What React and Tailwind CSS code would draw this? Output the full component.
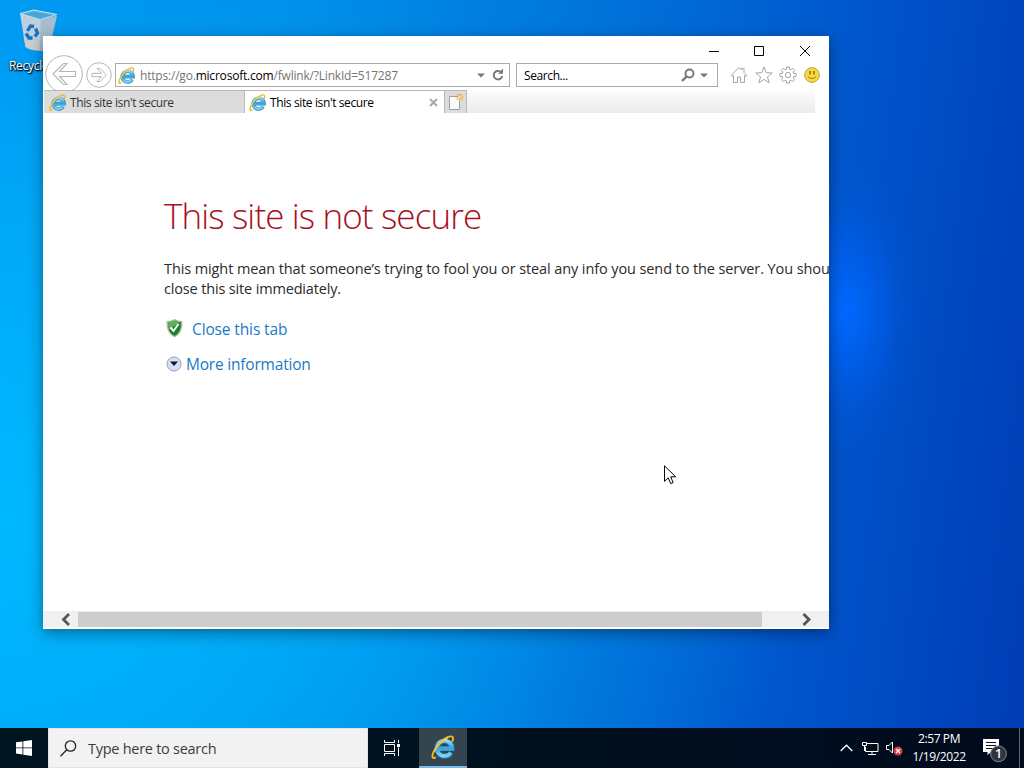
import { useId } from "react";

const IeLogo = ({ className }) => {
  const id = useId();
  return (
    <svg viewBox="0 0 24 24" className={className} fill="none">
      <defs>
        <linearGradient id={id} x1="0" y1="0" x2="0" y2="1">
          <stop offset="0" stopColor="#8adcf8" />
          <stop offset="0.5" stopColor="#35a4dc" />
          <stop offset="1" stopColor="#7fd4f5" />
        </linearGradient>
      </defs>
      <path d="M7 13.600h14.200a7.600 7.600 0 1 0-1.200 4.200" stroke="#2a7fb8" strokeWidth="5" />
      <path d="M7 13.600h14a7.600 7.600 0 1 0-1.200 3.800" stroke={`url(#${id})`} strokeWidth="3.600" />
      <path
        d="M4.200 22.600C1.600 24 .6 21.600 2.200 17.600 4.600 11.400 11 4.400 17 2c4.600-1.800 6 .2 4.400 4.200"
        stroke="#eeb818"
        strokeWidth="1.900"
        strokeLinecap="round"
      />
      <path d="M3 17.200C5.600 11 11.600 5 17 2.800" stroke="#ffe477" strokeWidth=".7" />
    </svg>
  );
};

const RecycleBin = () => (
  <svg width="40" height="44" viewBox="0 0 40 44" fill="none">
    <path d="M1 4.500 6.500 38q6 4 21 3.500L37 7 22 11Z" fill="#bfcfdd" />
    <path d="m22 11-2 31q5 0 10-1L38 7Z" fill="#a4bdcf" />
    <path d="m1 4.500 14-3.500 23 4.500L21.500 11Z" fill="#5fb5df" stroke="#c4dfee" />
    <path d="M5 5 15 3l18 3-12 3Z" fill="#4aa4d2" />
    <path d="M4.500 27 6.500 38q6 4 14 3.700L21 33Z" fill="#cfcdd0" opacity=".8" />
    <g stroke="#1474c8" strokeWidth="3.400">
      <path d="m8.500 22 3-5 3.500.500" />
      <path d="m16.500 19.500 2 4.500-2.500 3.500" />
      <path d="M13.500 29h-3.500L7 24.500" />
    </g>
  </svg>
);

const BackButton = () => (
  <svg width="38" height="38" viewBox="0 0 38 38" fill="#fff" stroke="#b5b5b5" className="shrink-0">
    <circle cx="19" cy="19" r="18.300" />
    <path d="M8 19 18.500 8.500H22l-7.500 8H30.500v5h-16l7.500 8h-3.500Z" strokeWidth="1.100" />
  </svg>
);

const ForwardButton = () => (
  <svg width="26" height="26" viewBox="0 0 26 26" fill="#fff" stroke="#b5b5b5" className="shrink-0">
    <circle cx="13" cy="13" r="12.300" />
    <path d="m20.500 13-6.500-6.500h-3l4.500 4.800H6v3.400h9.500L11 19.500h3Z" />
  </svg>
);

const Caret = () => (
  <svg width="8" height="5" viewBox="0 0 8 5">
    <path d="M0 .5h8l-4 4Z" fill="#777" />
  </svg>
);

const Refresh = () => (
  <svg width="12" height="14" viewBox="0 0 12 14" fill="none">
    <path d="M8.500 3.600A4.300 4.300 0 1 0 10.300 8" stroke="#777" strokeWidth="1.900" />
    <path d="M6 5.700h5V.5Z" fill="#777" />
  </svg>
);

const CommandIcons = () => (
  <div className="ml-[12px] flex h-[23px] items-center gap-[6.500px]">
    <svg width="18" height="18" viewBox="0 0 18 18" fill="none" stroke="#a5a5a5">
      <path d="M1 9.500 9 1.500l2.500 2.500V2.500h2.500v4l3 3-1 1-1.500-1V16.500h-4V11h-3v5.500h-4V9.500L2 10.500Z" />
    </svg>
    <svg width="18" height="18" viewBox="0 0 18 18" fill="none" stroke="#a5a5a5">
      <path d="m9 .9 2.200 5.800 6 .3-4.700 3.800 1.600 6L9 13.400l-5.100 3.400 1.600-6L.8 7l6-.3Z" />
    </svg>
    <svg width="18" height="18" viewBox="0 0 18 18" fill="none" stroke="#a0a0a0">
      <path d="M7.500 1h3v2.200l1.400.6 1.600-1.600 2.200 2.200-1.600 1.600.7 1.500H17v3h-2.200l-.7 1.500 1.600 1.600-2.200 2.200-1.600-1.600-1.400.6V17h-3v-2.200l-1.400-.6-1.600 1.600-2.200-2.200 1.600-1.600-.7-1.500H1v-3h2.200l.7-1.500-1.600-1.600 2.200-2.200 1.600 1.600 1.400-.6Z" />
      <circle cx="9" cy="9" r="2.600" />
    </svg>
    <svg width="16" height="16" viewBox="0 0 16 16" fill="none">
      <circle cx="8" cy="8" r="7.400" fill="#f7da38" stroke="#b9a45c" />
      <path d="M6 4v3.500M10 4v3.500" stroke="#8b6b16" strokeWidth="1.500" />
      <path d="M3.800 9.500q4.200 4 8.400 0" stroke="#9b7b20" />
    </svg>
  </div>
);

const TitleBar = () => (
  <div className="flex h-[27px] justify-end">
    <svg width="121" height="27" viewBox="0 0 121 27" fill="none" stroke="#000">
      <path d="M1 15.500h10M46.500 10.500h9v9h-9ZM92 10l10 10M102 10 92 20" />
    </svg>
  </div>
);

const AddressRow = () => (
  <div className="flex h-[27px] pl-[2px]">
    <div className="-mt-2 h-[35px] overflow-hidden">
      <BackButton />
    </div>
    <div className="-mt-px ml-[3px]">
      <ForwardButton />
    </div>
    <div className="ml-[3px] flex h-6 w-[395px] items-center border border-[#ababab] pr-[5px] pl-[2px]">
      <IeLogo className="size-[17px]" />
      <span className="mt-[2px] ml-[5px] text-xs tracking-[-0.2px] whitespace-pre text-[#757575]">
        https://go.<span className="text-black">microsoft.com</span>/fwlink/?LinkId=517287
      </span>
      <div className="ml-auto flex items-center gap-[7px]">
        <Caret />
        <Refresh />
      </div>
    </div>
    <div className="ml-[6px] flex h-6 w-[202px] items-center border border-[#ababab] pr-[9px] pl-[7px]">
      <span className="mt-[2px] text-xs tracking-[-0.4px] text-black">Search...</span>
      <div className="ml-auto flex items-center gap-[5px]">
        <svg width="14" height="14" viewBox="0 0 14 14" fill="none" stroke="#777">
          <circle cx="8.500" cy="5.500" r="4" strokeWidth="1.900" />
          <path d="m5.500 8.500-4.500 4.500" strokeWidth="2.400" />
        </svg>
        <Caret />
      </div>
    </div>
    <CommandIcons />
  </div>
);

const Tabs = () => (
  <div className="flex h-[23px] pl-[1px] text-xs tracking-[-0.38px]">
    <div className="flex w-[201px] items-center border-t border-r border-[#b8b8b8] bg-[#dcdcdc] pl-[5px] text-[#333]">
      <IeLogo className="size-[17px]" />
      <span className="mt-px ml-[4px]">This site isn&#39;t secure</span>
    </div>
    <div className="flex w-[199px] items-center border-t border-[#b8b8b8] bg-white pr-[6px] pl-[4px] text-black">
      <IeLogo className="size-[17px]" />
      <span className="mt-px ml-[4px]">This site isn&#39;t secure</span>
      <svg width="9" height="9" viewBox="0 0 9 9" className="ml-auto" stroke="#a8a8a8" strokeWidth="2">
        <path d="m1 1 7 7M8 1 1 8" />
      </svg>
    </div>
    <div className="flex w-[23px] items-center justify-center border border-b-0 border-[#b8b8b8] bg-[#dcdcdc]">
      <svg width="17" height="18" viewBox="0 0 17 18">
        <path d="M2.500 3.500h10v13h-10Z" fill="#fafafa" stroke="#a0a0a0" />
        <path d="M12.500 0v8M8.500 4h8M9.500 1l6 6M15.500 1l-6 6" stroke="#f0a030" />
        <circle cx="12.500" cy="4" r="1.500" fill="#ffdf8a" />
      </svg>
    </div>
    <div className="w-[348px] bg-linear-to-b from-[#fcfcfc] to-[#ececec]" />
  </div>
);

const PageContent = () => (
  <div className="flex h-[498px] flex-col overflow-hidden pt-[77px] pl-[121px]">
    <h1 className="h-[52px] text-[35px] leading-[52px] font-light tracking-[-0.88px] whitespace-nowrap text-[#a80f22]">
      This site is not secure
    </h1>
    <p className="mt-[17px] text-[14.5px] leading-5 tracking-[-0.1px] whitespace-nowrap text-[#2b2b2b]">
      This might mean that someone’s trying to fool you or steal any info you send to the server. You shou
      <br />
      <span className="tracking-[-0.16px]">close this site immediately.</span>
    </p>
    <a className="mt-[19px] flex h-6 items-center text-[15.5px] tracking-[-0.13px] text-[#1a7ac4]">
      <svg width="21" height="21" viewBox="0 0 21 21" fill="none" className="mb-[4px]">
        <path d="M10.500 1Q6 3.500 2.500 3q-.8 12 8 16.500 8.800-4.500 8-16.500-3.500.5-8-2Z" fill="#a9bba9" />
        <path d="M10.500 2.500Q7 4.500 4 4.300q-.5 9.800 6.500 13.700 7-3.900 6.500-13.700-3 .2-6.500-1.800Z" fill="#1d7d28" />
        <path d="M10.500 2.500Q7 4.500 4 4.300q0 4 1 7l11-6.500q-3-.5-5.500-2.300Z" fill="#5cb357" />
        <path d="m6.500 9.500 3 3.500 5-7" stroke="#fff" strokeWidth="2" />
      </svg>
      <span className="ml-[7px]">Close this tab</span>
    </a>
    <a className="mt-[11px] flex h-6 items-center pl-[2px] text-[15.5px] tracking-[-0.2px] text-[#1a7ac4]">
      <svg width="16" height="16" viewBox="0 0 16 16" className="mb-[3px]">
        <circle cx="8" cy="8" r="7" fill="#d7e0ee" stroke="#8fa3c4" />
        <path d="M4 5.500h8L8 10Z" fill="#0a1838" />
      </svg>
      <span className="ml-[4px]">More information</span>
    </a>
  </div>
);

const ScrollBar = () => (
  <div className="flex h-4 items-center bg-[#f0f0f0]">
    <svg width="35" height="16" viewBox="0 0 35 16" fill="none" stroke="#555" strokeWidth="2.800">
      <path d="m26 3-5.500 5.500L26 14" />
    </svg>
    <div className="h-[15px] w-[684px] bg-[#cdcdcd]" />
    <svg width="67" height="16" viewBox="0 0 67 16" fill="none" stroke="#555" strokeWidth="2.800">
      <path d="m41.500 3 5.500 5.500-5.500 5.500" />
    </svg>
  </div>
);

const Taskbar = () => (
  <div className="flex h-10 bg-linear-to-r from-[#00141f] to-[#000b1e] text-white">
    <div className="flex w-12 items-center justify-center">
      <svg width="16" height="16" viewBox="0 0 16 16" fill="#fff">
        <path d="M0 2.300 6.500 1.400v6.100H0ZM7.300 1.300 16 0v7.500H7.300ZM0 8.300h6.500v6.200L0 13.600ZM7.300 8.300H16V16l-8.700-1.300Z" />
      </svg>
    </div>
    <div className="flex w-80 items-center border border-[#dfe4e6] bg-[#f2f2f2] pl-[11px] text-[#3c3c3c]">
      <svg width="17" height="17" viewBox="0 0 17 17" fill="none" stroke="#222" strokeWidth="1.300">
        <circle cx="10.500" cy="6" r="5.200" />
        <path d="M6.800 9.800.5 16.200" />
      </svg>
      <span className="mt-[2px] ml-[11px] text-[14.5px] tracking-[-0.27px]">Type here to search</span>
    </div>
    <div className="flex w-[51px] items-center justify-center pr-[3px]">
      <svg width="17" height="16" viewBox="0 0 17 16" fill="none" stroke="#fff">
        <path d="M.5 0v2.500h10V0M.5 16v-2.500h10V16M.5 4.500h10v7H.5ZM14.500 0v3M14.500 7.500V16" />
        <path d="M13 4h3v3h-3Z" fill="#fff" stroke="none" />
      </svg>
    </div>
    <div className="flex w-12 items-center justify-center border-b-2 border-[#76b9ed] bg-[#354550]">
      <IeLogo className="size-6" />
    </div>
    <div className="ml-auto flex items-center">
      <svg width="13" height="8" viewBox="0 0 13 8" fill="none" stroke="#fff" strokeWidth="1.300">
        <path d="m.7 7 5.800-5.800L12.300 7" />
      </svg>
      <svg width="17" height="15" viewBox="0 0 17 15" fill="none" stroke="#fff" className="ml-[9px]">
        <path d="M5 2.500h11v8H3.500V6M10 10.500v3M6 13.500h8M.5 1.500h4v3h-4ZM2.500 5v5" />
      </svg>
      <svg width="17" height="16" viewBox="0 0 17 16" fill="none" className="ml-[7px]">
        <path d="M.5 5.500H3l3.500-3.500v11L3 9.500H.5Z" stroke="#fff" />
        <circle cx="12" cy="11" r="4.500" fill="#d93a40" />
        <path d="m10 9 4 4M14 9l-4 4" stroke="#fff" strokeWidth="1.200" />
      </svg>
      <div className="ml-[9px] flex w-[54px] flex-col items-center text-xs leading-[18px] tracking-[-0.4px]">
        <span>2:57 PM</span>
        <span>1/19/2022</span>
      </div>
      <svg width="26" height="26" viewBox="0 0 26 26" fill="none" className="mt-[3px] ml-[16px]">
        <path d="M1 2h16v13H9l-3.500 3V15H1Z" fill="#fff" />
        <path d="M4 5.500h10M4 8.500h10M4 11.500h7" stroke="#09111f" />
        <circle cx="16.500" cy="16.800" r="7.900" fill="#30343c" stroke="#858990" />
        <text x="16.500" y="21.300" textAnchor="middle" fontSize="12.500" fontWeight="600" fill="#fff">
          1
        </text>
      </svg>
      <div className="ml-[11px] h-10 w-[5px] border-l border-[#5c6470]" />
    </div>
  </div>
);

export default function App() {
  return (
    <div className="relative flex h-screen w-screen flex-col overflow-hidden bg-[radial-gradient(ellipse_80px_150px_at_845px_310px,#0068ff_0%,#0064f8a0_35%,#005ce830_70%,transparent_100%),radial-gradient(ellipse_800px_620px_at_0px_520px,#00b8ff_0%,#00b2fcb0_45%,#00a8f440_75%,transparent_100%),linear-gradient(97deg,#0098f2_0%,#0090ea_25%,#0078dc_50%,#0055cc_78%,#003cb4_100%)] font-['Open_Sans','Noto_Sans',sans-serif]">
      <div className="flex-1 pt-[9px] pl-[19px]">
        <RecycleBin />
        <div className="mt-[5px] -ml-[10px] text-xs tracking-[-0.3px] text-white [text-shadow:0_1px_2px_#000,1px_1px_1px_#000]">
          Recycle Bin
        </div>
      </div>
      <Taskbar />

      <div className="absolute top-9 left-[43px] flex h-[593px] w-[786px] flex-col overflow-hidden bg-white shadow-[0_4px_14px_rgba(0,0,0,0.4)]">
        <TitleBar />
        <AddressRow />
        <Tabs />
        <PageContent />
        <ScrollBar />
      </div>

      <svg className="absolute top-[465px] left-[664px]" width="13" height="20" viewBox="0 0 13 20">
        <path d="M.5.800v15.500l3.700-3.500 2.500 5.800 2.500-1-2.500-5.800h5Z" fill="#fff" stroke="#000" />
      </svg>
    </div>
  );
}
